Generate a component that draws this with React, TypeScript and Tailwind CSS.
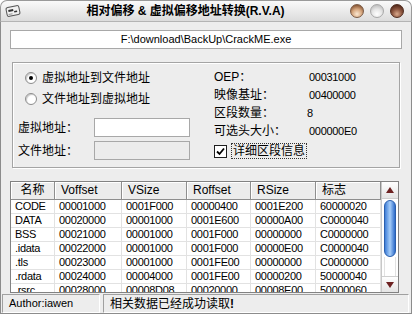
import React from "react";

// section table of the loaded PE file
const rows: string[][] = [
  ["CODE", "00001000", "0001F000", "00000400", "0001E200", "60000020"],
  ["DATA", "00020000", "00001000", "0001E600", "00000A00", "C0000040"],
  ["BSS", "00021000", "00001000", "0001F000", "00000000", "C0000000"],
  [".idata", "00022000", "00001000", "0001F000", "00000E00", "C0000040"],
  [".tls", "00023000", "00001000", "0001FE00", "00000000", "C0000000"],
  [".rdata", "00024000", "00004000", "0001FE00", "00000200", "50000040"],
  [".rsrc", "00028000", "00008D08", "00020000", "00008E00", "50000060"],
];

const headers = ["名称", "Voffset", "VSize", "Roffset", "RSize", "标志"];
const colW = ["w-[44px]", "w-[67px]", "w-[65px]", "w-[64px]", "w-[65px]", "w-[65px]"];

function TitleIcon(): JSX.Element {
  return (
    <svg width="16" height="14" viewBox="0 0 16 14" className="ml-[4px]">
      <g transform="rotate(-12 8 7)">
        <rect x="1.5" y="2.5" width="13" height="9" rx="2" fill="#f1f1f1" stroke="#555" />
        <rect x="3.5" y="5" width="5" height="2" fill="#333" />
        <path d="M9 8 L12 8" stroke="#333" strokeWidth="1.5" />
        <path d="M3 9.5 L7 9.5" stroke="#999" />
      </g>
    </svg>
  );
}

function WinButtons(): JSX.Element {
  return (
    <div className="mr-[7px] flex items-center gap-[6px]">
      <div className="h-[14px] w-[14px] rounded-full border border-[#7a5a44] bg-[radial-gradient(circle_at_50%_75%,#fbe8d2_0%,#d6a77f_45%,#8e5c3a_80%)]" />
      <div className="h-[14px] w-[14px] rounded-full border border-[#a8a8a8] bg-[radial-gradient(circle_at_50%_75%,#ffffff_0%,#e6e6e6_45%,#bdbdbd_85%)]" />
      <div className="h-[14px] w-[14px] rounded-full border border-[#4e2a1c] bg-[radial-gradient(circle_at_50%_75%,#d9a98c_0%,#8d5640_45%,#4f2618_85%)]" />
    </div>
  );
}

function Radio({ checked }: { checked?: boolean }): JSX.Element {
  return (
    <div className="flex h-[12px] w-[12px] items-center justify-center rounded-full border border-[#8c8c8c] bg-white shadow-[inset_1px_1px_1px_#c8c8c8]">
      {checked && <div className="h-[4px] w-[4px] rounded-full bg-black" />}
    </div>
  );
}

function Field({ disabled }: { disabled?: boolean }): JSX.Element {
  return (
    <div
      className={
        disabled
          ? "h-[19px] w-[96px] border border-[#a8a8a8] bg-[#ececec]"
          : "h-[19px] w-[96px] border border-[#a8a8a8] bg-white"
      }
    />
  );
}

function ScrollBar(): JSX.Element {
  return (
    <div className="flex w-[17px] flex-col border-l border-[#c8c8c8] bg-white">
      <div className="flex h-[17px] items-center justify-center border-b border-[#cfcfcf] bg-gradient-to-b from-white to-[#e4e4e4]">
        <svg width="8" height="6" viewBox="0 0 8 6">
          <polygon points="4,0 8,6 0,6" fill="#6e2222" />
        </svg>
      </div>
      <div className="mx-[2px] mt-[1px] h-[57px] rounded-full border border-[#2a5fae] bg-gradient-to-r from-[#3f7fd8] via-[#a6cdf8] to-[#2f6cc9]" />
      <div className="mx-[2px] flex-1 border-x border-[#e2e2e2]" />
      <div className="flex h-[16px] items-center justify-center border-t border-[#cfcfcf] bg-gradient-to-b from-white to-[#e4e4e4]">
        <svg width="8" height="6" viewBox="0 0 8 6">
          <polygon points="0,0 8,0 4,6" fill="#6e2222" />
        </svg>
      </div>
    </div>
  );
}

export default function App(): JSX.Element {
  return (
    <div className="flex h-[314px] w-[412px] flex-col overflow-hidden font-['Liberation_Sans','Noto_Sans_CJK_SC',sans-serif] text-[12px] text-black">
      {/* title bar */}
      <div className="flex h-[22px] items-center rounded-t-[7px] border border-b-[#b4b4b4] border-[#9a9a9a] bg-gradient-to-b from-[#fafafa] to-[#dcdcdc]">
        <TitleIcon />
        <div className="flex-1 text-center text-[12px] font-bold leading-[20px]">
          相对偏移 &amp; 虚拟偏移地址转换(R.V.A)
        </div>
        <WinButtons />
      </div>

      <div className="flex flex-1 flex-col border-x border-b border-[#8c8c8c] bg-[#ededed]">
        <div className="flex flex-col px-[9px]">
          {/* file path */}
          <div className="mt-[8px] flex h-[19px] items-center justify-center border border-[#a8a8a8] bg-white text-[11px]">
            {"F:\\download\\BackUp\\CrackME.exe"}
          </div>

          {/* options group */}
          <div className="mx-[2px] mt-[13px] flex h-[106px] border border-[#a4a4a4] shadow-[1px_1px_0_#fff,inset_1px_1px_0_#fff]">
            <div className="flex w-[193px] flex-col pt-[7px]">
              <div className="flex h-[16px] items-center pl-[12px]">
                <Radio checked />
                <span className="ml-[5px]">虚拟地址到文件地址</span>
              </div>
              <div className="mt-[5px] flex h-[16px] items-center pl-[12px]">
                <Radio />
                <span className="ml-[5px]">文件地址到虚拟地址</span>
              </div>
              <div className="mt-[11px] flex items-center pl-[5px]">
                <span className="w-[76px]">虚拟地址：</span>
                <Field />
              </div>
              <div className="mt-[4px] flex items-center pl-[5px]">
                <span className="w-[76px]">文件地址：</span>
                <Field disabled />
              </div>
            </div>
            <div className="flex flex-1 flex-col pl-[8px] pt-[5px]">
              {[
                ["OEP：", "00031000", ""],
                ["映像基址：", "00400000", ""],
                ["区段数量：", "8", "-ml-[2px]"],
                ["可选头大小：", "000000E0", ""],
              ].map(([k, v, extra]) => (
                <div key={k} className="flex h-[18px] items-center">
                  <span className="w-[95px]">{k}</span>
                  <span className={`text-[11px] tracking-[-0.3px] ${extra}`}>{v}</span>
                </div>
              ))}
              <div className="mt-[3px] flex h-[16px] items-center">
                <div className="flex h-[13px] w-[13px] items-center justify-center border border-[#1e1e1e] bg-white">
                  <svg width="9" height="9" viewBox="0 0 9 9">
                    <path d="M1 4.5 L3.5 7 L8 1.5" fill="none" stroke="#000" strokeWidth="1.8" />
                  </svg>
                </div>
                <span className="ml-[4px] border border-dotted border-[#333] px-[1px] leading-[14px]">详细区段信息</span>
              </div>
            </div>
          </div>

          {/* section list */}
          <div className="mr-[3px] mt-[13px] flex h-[112px] overflow-hidden border border-[#828282] bg-white">
            <div className="flex w-[370px] flex-col">
              <div className="flex h-[18px] shrink-0">
                {headers.map((h, i) => (
                  <div
                    key={h}
                    className={`${colW[i]} h-[18px] border-b border-r border-[#8e8e8e] bg-[#ececec] shadow-[inset_1px_1px_0_#fff] leading-[17px] ${
                      i === 0 ? "text-center" : "pl-[6px]"
                    }`}
                  >
                    {h}
                  </div>
                ))}
              </div>
              {rows.map((r) => (
                <div key={r[0]} className="flex h-[14px] shrink-0">
                  {r.map((c, i) => (
                    <div
                      key={i}
                      className={`${colW[i]} h-[14px] border-b border-r border-[#e2e2e2] pl-[4px] text-[11px] leading-[13px] tracking-[-0.3px]`}
                    >
                      {c}
                    </div>
                  ))}
                </div>
              ))}
            </div>
            <ScrollBar />
          </div>
        </div>

        {/* status bar */}
        <div className="mt-[1px] flex h-[19px] px-[1px]">
          <div className="flex w-[98px] items-center border border-[#a0a0a0] border-b-white border-r-white pl-[6px] text-[11px]">
            Author:iawen
          </div>
          <div className="ml-[3px] mr-[1px] flex flex-1 items-center border border-[#a0a0a0] border-b-white border-r-white pl-[6px]">
            相关数据已经成功读取<span className="font-bold">!</span>
          </div>
        </div>
      </div>
    </div>
  );
}
